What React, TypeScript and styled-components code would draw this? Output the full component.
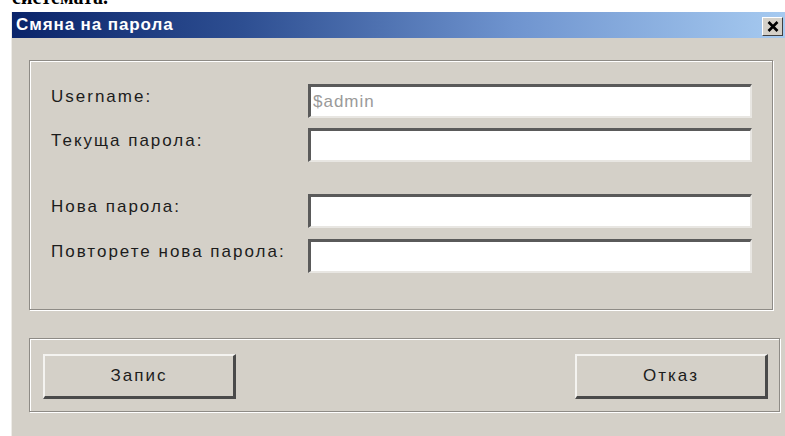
import React from "react";
import styled, { createGlobalStyle } from "styled-components";

const GlobalStyle = createGlobalStyle`
  html, body {
    margin: 0;
    padding: 0;
    background: #ffffff;
  }
  * {
    box-sizing: border-box;
  }
`;

const PasswordDialog = () => {
  return (
    <Page>
      <GlobalStyle />
      <Caption>
        <CaptionText>системата.</CaptionText>
      </Caption>
      <Window>
        <TitleBar>
          <Title>Смяна на парола</Title>
          <CloseButton aria-label="close">
            <svg width="12" height="11" viewBox="0 0 12 11">
              <path d="M1.5 1 L10.5 10 M10.5 1 L1.5 10" stroke="#000" strokeWidth="2.6" />
            </svg>
          </CloseButton>
        </TitleBar>
        <Body>
          <GroupBox $right={12} $pad="23px 20px 36px 21px">
            <Row>
              <Label>Username:</Label>
              <Input value="$admin" readOnly $muted />
            </Row>
            <Row $top={10}>
              <Label>Текуща парола:</Label>
              <Input type="password" />
            </Row>
            <Row $top={32}>
              <Label>Нова парола:</Label>
              <Input type="password" />
            </Row>
            <Row $top={11}>
              <Label>Повторете нова парола:</Label>
              <Input type="password" />
            </Row>
          </GroupBox>
          <GroupBox $right={5} $pad="15px 11px 12px 13px" $top={28}>
            <ButtonRow>
              <Button>Запис</Button>
              <Button>Отказ</Button>
            </ButtonRow>
          </GroupBox>
        </Body>
      </Window>
    </Page>
  );
};

export default function App() {
  return <PasswordDialog />;
}

const Page = styled.div`
  width: 785px;
  height: 436px;
  overflow: hidden;
  display: flex;
  flex-direction: column;
  background: #ffffff;
`;

const Caption = styled.div`
  height: 12px;
  overflow: hidden;
  padding-left: 12px;
`;

const CaptionText = styled.div`
  font-family: "Liberation Serif", serif;
  font-weight: bold;
  font-size: 20px;
  line-height: 20px;
  margin-top: -13px;
  color: #000;
`;

const Window = styled.div`
  flex: 1;
  margin-left: 11px;
  border-left: 1px solid #eeece8;
  background: #d4d0c8;
  display: flex;
  flex-direction: column;
`;

const TitleBar = styled.div`
  height: 26px;
  display: flex;
  align-items: center;
  justify-content: space-between;
  padding: 0 2px 0 4px;
  background: linear-gradient(to right, #0a246a 0%, #2e4f92 30%, #6f94cf 65%, #a6caf0 100%);
`;

const Title = styled.span`
  font-family: "Liberation Sans", Arial, sans-serif;
  font-weight: bold;
  font-size: 17px;
  letter-spacing: 0.9px;
  color: #ffffff;
`;

const CloseButton = styled.div`
  width: 21px;
  height: 19px;
  margin-top: 2px;
  background: #d4d0c8;
  border-top: 1px solid #ffffff;
  border-left: 1px solid #ffffff;
  border-right: 1px solid #404040;
  border-bottom: 1px solid #404040;
  display: flex;
  align-items: center;
  justify-content: center;
`;

const Body = styled.div`
  flex: 1;
  padding: 22px 0 0 17px;
  display: flex;
  flex-direction: column;
`;

const GroupBox = styled.div<{ $right: number; $pad: string; $top?: number }>`
  margin-right: ${(p) => p.$right}px;
  margin-top: ${(p) => p.$top ?? 0}px;
  padding: ${(p) => p.$pad};
  border: 1px solid #8e8b86;
  box-shadow: inset 1px 1px 0 #ffffff, 1px 1px 0 #ffffff;
  display: flex;
  flex-direction: column;
`;

const Row = styled.div<{ $top?: number }>`
  display: flex;
  align-items: center;
  height: 34px;
  margin-top: ${(p) => p.$top ?? 0}px;
`;

const Label = styled.div`
  width: 257px;
  flex-shrink: 0;
  margin-top: -8px;
  font-family: "Liberation Sans", Arial, sans-serif;
  font-size: 17px;
  letter-spacing: 2px;
  color: #1c1c1c;
  white-space: nowrap;
`;

const Input = styled.input<{ $muted?: boolean }>`
  flex: 1;
  height: 34px;
  min-width: 0;
  padding: 0 3px 0 2px;
  background: #ffffff;
  border-top: 3px solid #5a5a5a;
  border-left: 3px solid #5a5a5a;
  border-right: 2px solid #e8e6e2;
  border-bottom: 2px solid #e8e6e2;
  outline: none;
  font-family: "Liberation Sans", Arial, sans-serif;
  font-size: 17px;
  letter-spacing: 1px;
  color: ${(p) => (p.$muted ? "#9a9a9a" : "#000")};
`;

const ButtonRow = styled.div`
  display: flex;
  justify-content: space-between;
`;

const Button = styled.button`
  width: 193px;
  height: 45px;
  background: #d4d0c8;
  border-top: 2px solid #f4f3f0;
  border-left: 2px solid #f4f3f0;
  border-right: 3px solid #4a4a4a;
  border-bottom: 3px solid #4a4a4a;
  font-family: "Liberation Sans", Arial, sans-serif;
  font-size: 17px;
  letter-spacing: 2px;
  color: #1c1c1c;
  padding: 0;
`;
